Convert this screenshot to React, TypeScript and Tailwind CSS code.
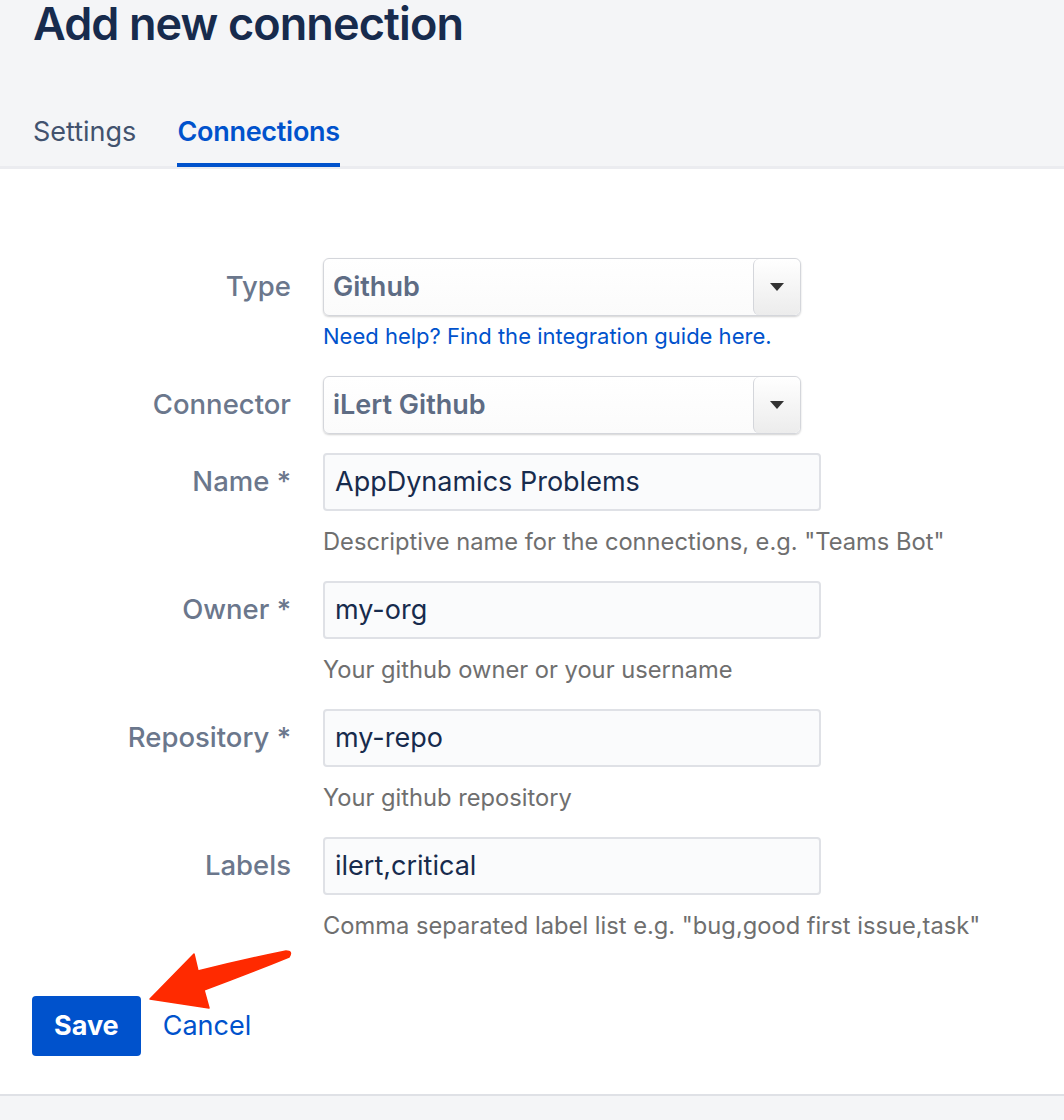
import React from 'react';

const fields = [
  { label: 'Name *', value: 'AppDynamics Problems', hint: 'Descriptive name for the connections, e.g. "Teams Bot"' },
  { label: 'Owner *', value: 'my-org', hint: 'Your github owner or your username' },
  { label: 'Repository *', value: 'my-repo', hint: 'Your github repository' },
  { label: 'Labels', value: 'ilert,critical', hint: 'Comma separated label list e.g. "bug,good first issue,task"' },
];

function Select({ value }: { value: string }) {
  return (
    <div className="flex h-[58px] w-[478px] overflow-hidden rounded-[6px] border border-[#d4d6db] bg-gradient-to-b from-white to-[#fbfbfb] shadow-[0_1px_2px_rgba(0,0,0,0.18)]">
      <div className="flex flex-1 items-center pl-[9px] text-[27px] font-semibold text-[#5e6c84]">{value}</div>
      <div className="flex w-[47px] items-center justify-center rounded-[6px] border-l border-[#d4d6db] bg-gradient-to-b from-white to-[#ececec]">
        <svg width="14" height="8" viewBox="0 0 14 8">
          <path d="M0 0 L14 0 L7 8 Z" fill="#333" />
        </svg>
      </div>
    </div>
  );
}

function Label({ children }: { children: React.ReactNode }) {
  return (
    <div className="flex h-[58px] w-[291px] shrink-0 items-center justify-end text-[27.5px] font-medium text-[#6b778c]">
      {children}
    </div>
  );
}

export default function App() {
  return (
    <div className="relative min-h-[1120px] bg-white font-['Inter',sans-serif]">
      {/* Header */}
      <div className="bg-[#f4f5f7]">
        <h1 className="pl-[33px] text-[45px] leading-[47px] font-semibold tracking-[-0.02em] text-[#172b4d]">
          Add new connection
        </h1>
        <div className="mt-[68px] flex gap-[41px] border-b-[3px] border-[#ebecf0] pl-[33px] text-[27px] leading-[34px]">
          <div className="pb-[14px] text-[#42526e]">Settings</div>
          <div className="-mb-[1px] border-b-4 border-[#0052cc] pb-[14px] font-semibold tracking-[-0.01em] text-[#0052cc]">
            Connections
          </div>
        </div>
      </div>

      {/* Form */}
      <div className="pt-[89px]">
        <div className="flex gap-[32px]">
          <Label>Type</Label>
          <div>
            <Select value="Github" />
            <a className="mt-[6px] block text-[22px] leading-[28px] text-[#0052cc]">Need help? Find the integration guide here.</a>
          </div>
        </div>
        <div className="mt-[26px] flex gap-[32px]">
          <Label>Connector</Label>
          <Select value="iLert Github" />
        </div>
        <div className="mt-[19px] flex flex-col gap-[25px]">
          {fields.map((f) => (
            <div key={f.label} className="flex gap-[32px]">
              <Label>{f.label}</Label>
              <div>
                <div className="flex h-[58px] w-[498px] items-center rounded-[4px] border-2 border-[#dfe1e6] bg-[#fafbfc] pl-[10px] text-[27px] text-[#172b4d]">
                  {f.value}
                </div>
                <div className="mt-[17px] text-[23.7px] leading-[28px] text-[#6f6f6f]">{f.hint}</div>
              </div>
            </div>
          ))}
        </div>

        {/* Actions */}
        <div className="mt-[56px] flex items-center gap-[22px] pl-[32px]">
          <button className="h-[60px] rounded-[4px] bg-[#0052cc] px-[22px] text-[27px] font-bold text-white">Save</button>
          <a className="text-[27px] text-[#0052cc]">Cancel</a>
        </div>
      </div>

      {/* Footer */}
      <div className="mt-[38px] h-[28px] border-t-2 border-[#dfe1e6] bg-[#f4f5f7]" />

      {/* Red annotation arrow */}
      <svg className="absolute left-[140px] top-[945px]" width="160" height="70" viewBox="140 945 160 70">
        <path
          d="M150 999 L194 954 L198 971 Q242 960 286 951 Q293 951 289 957 Q250 973 204 990 L209 1008 Z"
          fill="#ff2a00"
          stroke="#ff2a00"
          strokeWidth="1.5"
          strokeLinejoin="round"
        />
      </svg>
    </div>
  );
}
